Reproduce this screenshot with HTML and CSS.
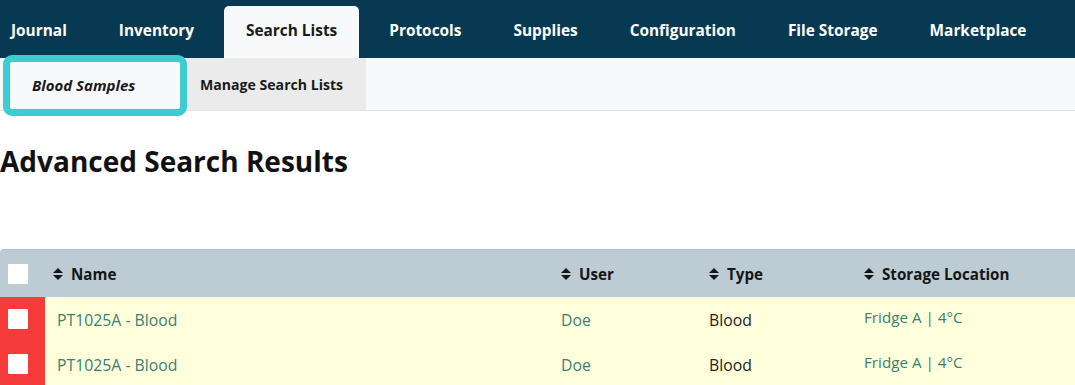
FILE: index.html
```html
<!DOCTYPE html>
<html>
<head>
<meta charset="utf-8">
<link rel="stylesheet" href="styles.css">
</head>
<body>
<nav class="topnav">
  <a class="nav-item first">Journal</a>
  <a class="nav-item">Inventory</a>
  <a class="nav-item active">Search Lists</a>
  <a class="nav-item">Protocols</a>
  <a class="nav-item">Supplies</a>
  <a class="nav-item">Configuration</a>
  <a class="nav-item">File Storage</a>
  <a class="nav-item">Marketplace</a>
</nav>
<div class="subnav">
  <a class="sub-item current"><span>Blood Samples</span></a>
  <a class="sub-item manage">Manage Search Lists</a>
</div>
<h1 class="title">Advanced Search Results</h1>
<div class="table">
  <div class="row head">
    <div class="cell check"><span class="box"></span></div>
    <div class="cell name"><span class="sort"></span>Name</div>
    <div class="cell user"><span class="sort"></span>User</div>
    <div class="cell type"><span class="sort"></span>Type</div>
    <div class="cell loc"><span class="sort"></span>Storage Location</div>
  </div>
  <div class="row data">
    <div class="cell check red"><span class="box"></span></div>
    <div class="cell name link">PT1025A - Blood</div>
    <div class="cell user link">Doe</div>
    <div class="cell type">Blood</div>
    <div class="cell loc link up">Fridge A | 4°C</div>
  </div>
  <div class="row data">
    <div class="cell check red"><span class="box"></span></div>
    <div class="cell name link">PT1025A - Blood</div>
    <div class="cell user link">Doe</div>
    <div class="cell type">Blood</div>
    <div class="cell loc link up">Fridge A | 4°C</div>
  </div>
</div>
</body>
</html>
```

FILE: styles.css
```css
* { box-sizing: border-box; }
html, body { margin: 0; padding: 0; background: #ffffff; overflow: hidden; }
body { font-family: "Open Sans", "Noto Sans", sans-serif; color: #212529; width: 1075px; height: 385px; }

.topnav {
  display: flex;
  align-items: flex-end;
  height: 58px;
  background: #073a52;
  padding-left: 11px;
}
.nav-item {
  display: flex;
  align-items: center;
  height: 52px;
  padding: 0 26px 4px;
  font-size: 15.4px;
  font-weight: 700;
  color: #ffffff;
}
.nav-item.first { padding-left: 0; }
.nav-item.active {
  background: #f8f9fb;
  color: #1b1b1b;
  border-radius: 5px 5px 0 0;
  padding: 0 22px 4px;
  margin: 0 4px;
}

.subnav {
  display: flex;
  height: 53px;
  background: #f8f9fb;
  border-bottom: 1px solid #dfe1e4;
}
.sub-item {
  display: flex;
  align-items: center;
  font-weight: 700;
  color: #1b1b1b;
}
.sub-item.current {
  width: 187px;
  padding-left: 3px;
  align-items: flex-start;
  position: relative;
  z-index: 1;
}
.sub-item.current span {
  display: flex;
  align-items: center;
  width: 184px;
  height: 61px;
  margin-top: -3px;
  padding-left: 22px;
  padding-bottom: 1px;
  background: #f8f9fb;
  border: 7px solid #3dcccf;
  border-radius: 9px;
  font-style: italic;
  font-size: 15px;
}
.sub-item.manage {
  width: 179px;
  background: #ebebeb;
  padding-left: 13px;
  font-size: 14.1px;
}

.title {
  margin: 34px 0 0 0;
  font-size: 28px;
  font-weight: 700;
  color: #111111;
  line-height: 32px;
  height: 32px;
}

.table { margin-top: 72px; }
.row {
  display: grid;
  grid-template-columns: 45px 508px 148px 155px 1fr;
  align-items: center;
}
.row.head {
  height: 48px;
  background: #bccbd4;
  border-radius: 4px 0 0 0;
  border-top: 1px solid #b0c0c9;
  font-weight: 700;
  font-size: 15.2px;
  color: #151515;
}
.row.data {
  height: 45px;
  background: #ffffdc;
  font-size: 15.8px;
  color: #222222;
}
.cell { display: flex; align-items: center; height: 100%; }
.check { padding-left: 8px; }
.check.red { background: #f63b3b; align-items: flex-start; padding-top: 12px; }
.box { display: block; width: 20px; height: 20px; background: #ffffff; border-radius: 1px; }
.head .name { padding-left: 8px; }
.data .name { padding-left: 12px; }
.user { padding-left: 8px; }
.type { padding-left: 8px; }
.loc { padding-left: 8px; }
.link { color: #3a7f72; }
.up { padding-bottom: 6px; font-size: 15.2px; }

.sort {
  display: inline-block;
  width: 10px;
  height: 12px;
  margin-right: 8px;
  position: relative;
}
.sort::before, .sort::after {
  content: "";
  position: absolute;
  left: 0;
  border-left: 5px solid transparent;
  border-right: 5px solid transparent;
}
.sort::before { top: 0; border-bottom: 5.5px solid #151515; }
.sort::after { bottom: 0; border-top: 5.5px solid #151515; }
```
